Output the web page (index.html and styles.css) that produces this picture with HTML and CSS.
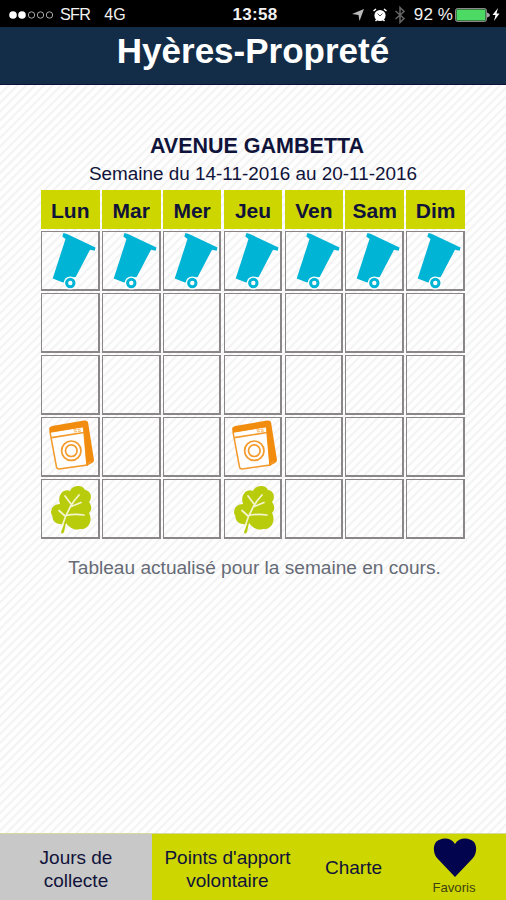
FILE: index.html
```html
<!DOCTYPE html>
<html lang="fr">
<head>
<meta charset="utf-8">
<title>Hyères-Propreté</title>
<link rel="stylesheet" href="styles.css">
</head>
<body>
<svg class="defs" aria-hidden="true">
  <symbol id="bin" viewBox="0 0 58 60">
    <path class="bin-fill" d="M22.500 2 L26 3 L54.500 16.500 L53.700 19.700 L49 18.700 L34.700 46 L29 47 L24 51 L22 51.500 L11.700 47.500 L24.500 8 L21.300 5.500 Z"/>
    <circle class="bin-hub" cx="29.300" cy="52" r="6.600"/>
    <circle class="bin-wheel" cx="29.300" cy="52" r="3.700"/>
  </symbol>
  <symbol id="washer" viewBox="0 0 58 60">
    <path class="washer-body" d="M9 15 L42.500 9.500 L46 48 L18 52 Q16 52 15.500 50 Z"/>
    <path class="washer-side" d="M8 12 Q8 10 11 9 L43 3.500 Q46 3 47 5 L53 43 Q53 45 51 46 L45.500 49 L42.500 10 L9 15.500 Z"/>
    <path class="washer-line" d="M10.500 20.700 L43 15.500 M46.500 47 L50 44.500"/>
    <path class="washer-buttons" d="M32.500 13.200 L39.500 12 M33 15 L40 13.800"/>
    <circle class="washer-line" cx="30.300" cy="33.700" r="9.700"/>
    <circle class="washer-line" cx="30.300" cy="33.700" r="5.800"/>
  </symbol>
  <symbol id="leaf" viewBox="0 0 58 60">
    <path class="leaf-fill" d="M20 53 L23 45 C17 46 11 43 11.500 37 C8 33 11 25 19 25 C16 17 22 9 29 12 C31 6 42 5 44 11 C51 12 51 20 48 23 C51 27 51 31 48 34 C52 41 48 51 39 50 C33 52 28 48 25 44 L23 53 Q21 56 20 53 Z"/>
    <path class="leaf-vein" d="M21.500 46 Q25 34 33 22 L38 16 M24 17 L30 25 M29 28 L40 23.500 M24 37 L18 31.500 M25 36.500 Q33 34.500 43 36"/>
  </symbol>
</svg>

<div class="status">
  <div class="status-left">
    <svg class="signal" viewBox="0 0 47 10"><g class="on"><circle cx="5" cy="5" r="3.8"/><circle cx="14" cy="5" r="3.8"/></g><g class="off"><circle cx="23.500" cy="5" r="3.200"/><circle cx="32.500" cy="5" r="3.200"/><circle cx="41.500" cy="5" r="3.200"/></g></svg>
    <span class="carrier">SFR</span><span class="network">4G</span>
  </div>
  <div class="clock">13:58</div>
  <div class="status-right">
    <svg class="arrow" viewBox="0 0 14 14"><path d="M13 1 L8.500 13 L7.500 7 L1 6 Z"/></svg>
    <svg class="alarm" viewBox="0 0 16 16"><circle cx="8" cy="8.500" r="5.600"/><path class="legs" d="M1.500 4 L4 2 M12 2 L14.500 4 M3.500 14 L5 12.500 M12.500 14 L11 12.500"/><path class="hands" d="M5.500 6.500 L8 9 L10.500 6.500"/></svg>
    <svg class="bluetooth" viewBox="0 0 12 18"><path d="M1.500 5 L10 12.500 L6 16.500 V1.500 L10 5.500 L1.500 13"/></svg>
    <span class="percent">92 %</span>
    <svg class="battery" viewBox="0 0 36 14"><rect class="case" x=".7" y=".7" width="30.600" height="12.600" rx="1.500"/><rect class="level" x="1.500" y="1.500" width="29" height="11"/><path class="tip" d="M32 4.500 Q35 5.500 35 7 Q35 8.500 32 9.500 Z"/></svg>
    <svg class="bolt" viewBox="0 0 8 13"><path d="M6 0 L0.500 7 H3.500 L2 13 L7.500 5.500 H4.500 Z"/></svg>
  </div>
</div>
<header class="header"><h1>Hyères-Propreté</h1></header>

<main class="content">
  <h2 class="street">AVENUE GAMBETTA</h2>
  <p class="week">Semaine du 14-11-2016 au 20-11-2016</p>
  <div class="table">
    <div class="day">Lun</div><div class="day">Mar</div><div class="day">Mer</div><div class="day">Jeu</div><div class="day">Ven</div><div class="day">Sam</div><div class="day">Dim</div>
    <div class="cell"><svg><use href="#bin"/></svg></div><div class="cell"><svg><use href="#bin"/></svg></div><div class="cell"><svg><use href="#bin"/></svg></div><div class="cell"><svg><use href="#bin"/></svg></div><div class="cell"><svg><use href="#bin"/></svg></div><div class="cell"><svg><use href="#bin"/></svg></div><div class="cell"><svg><use href="#bin"/></svg></div>
    <div class="cell"></div><div class="cell"></div><div class="cell"></div><div class="cell"></div><div class="cell"></div><div class="cell"></div><div class="cell"></div>
    <div class="cell"></div><div class="cell"></div><div class="cell"></div><div class="cell"></div><div class="cell"></div><div class="cell"></div><div class="cell"></div>
    <div class="cell"><svg><use href="#washer"/></svg></div><div class="cell"></div><div class="cell"></div><div class="cell"><svg><use href="#washer"/></svg></div><div class="cell"></div><div class="cell"></div><div class="cell"></div>
    <div class="cell"><svg><use href="#leaf"/></svg></div><div class="cell"></div><div class="cell"></div><div class="cell"><svg><use href="#leaf"/></svg></div><div class="cell"></div><div class="cell"></div><div class="cell"></div>
  </div>
  <p class="note">Tableau actualisé pour la semaine en cours.</p>
</main>

<nav class="tabs">
  <div class="tab current">Jours de<br>collecte</div>
  <div class="tab">Points d'apport<br>volontaire</div>
  <div class="tab charter">Charte</div>
  <div class="tab favorites"><svg viewBox="0 0 44 40"><path d="M22 39 L4 20 C0 15 0 8 3 4 C8 -1 18 -1 22 6 C26 -1 36 -1 41 4 C44 8 44 15 40 20 Z"/></svg><span>Favoris</span></div>
</nav>
</body>
</html>
```
FILE: styles.css
```css
* { box-sizing: border-box; }
body {
  margin: 0;
  width: 506px;
  height: 900px;
  overflow: hidden;
  display: flex;
  flex-direction: column;
  font-family: "Liberation Sans", Arial, sans-serif;
  color: #10133a;
  background: repeating-linear-gradient(135deg, #fefefe 0 3px, #f3f3f3 4px 5px, #fefefe 6.2px);
}
h1, h2, p { margin: 0; }
.defs { display: none; }

.status {
  height: 27px;
  flex: none;
  background: #000;
  color: #f2f2f2;
  display: grid;
  grid-template-columns: 1fr auto 1fr;
  align-items: center;
  padding: 2px 6px 0 8px;
  font-size: 17px;
  line-height: 25px;
}
.status-left, .status-right { display: flex; align-items: center; }
.status-right { justify-content: flex-end; }
.signal { width: 47px; height: 10px; margin-right: 5px; }
.on { fill: #fff; }
.off { fill: none; stroke: #aaa; }
.carrier { letter-spacing: -.7px; font-size: 16.2px; }
.network { margin-left: 14px; font-size: 16px; }
.clock { font-weight: bold; font-size: 17px; letter-spacing: .3px; padding-left: 2px; }
.arrow { width: 14px; height: 14px; fill: #bbb; }
.alarm { width: 16px; height: 16px; margin-left: 7px; fill: #fff; }
.legs { stroke: #fff; stroke-width: 1.5; }
.hands { fill: none; stroke: #555; }
.bluetooth { width: 12px; height: 18px; margin: 0 8px 0 6px; fill: none; stroke: #666; stroke-width: 1.5; }
.percent { font-size: 17px; letter-spacing: .1px; white-space: nowrap; }
.battery { width: 36px; height: 14px; margin-left: 2px; }
.case { fill: none; stroke: #aaa; }
.level { fill: #4cd964; }
.tip { fill: #aaa; }
.bolt { width: 8px; height: 13px; margin-left: 1px; fill: #fff; }

.header {
  height: 58px;
  flex: none;
  background: #132c47;
  border-bottom: 1px solid #0a123a;
  text-align: center;
  color: #fff;
}
.header h1 { font-size: 35px; line-height: 48px; }

.content {
  flex: 1;
  display: flex;
  flex-direction: column;
  align-items: center;
  padding-top: 47px;
}
.street { font-size: 21.5px; line-height: 28px; padding-left: 8px; white-space: nowrap; }
.week { font-size: 18.9px; line-height: 28px; white-space: nowrap; }
.table {
  margin-top: 2px;
  width: 424px;
  display: grid;
  grid-template-columns: repeat(7, minmax(0, 1fr));
  grid-template-rows: 39px repeat(5, 60.3px);
  gap: 1.8px 2.3px;
}
.day {
  background: #ced600;
  font-weight: bold;
  font-size: 21px;
  line-height: 41px;
  text-align: center;
}
.cell {
  border: 1px solid #8b8788;
  border-right-width: 2px;
  border-bottom-width: 2px;
}
.cell svg { display: block; width: 58px; height: 60px; margin: -1px; }
.bin-fill { fill: #00b4d5; }
.bin-hub { fill: #fff; }
.bin-wheel { fill: #fff; stroke: #00b4d5; stroke-width: 3; }
.washer-body { fill: #fff; stroke: #f39a2b; stroke-width: 1.5; }
.washer-side { fill: #f28c0f; }
.washer-line { fill: none; stroke: #f39a2b; stroke-width: 1.7; }
.washer-buttons { stroke: #f7b766; stroke-width: 1.2; stroke-dasharray: 3 1; }
.leaf-fill { fill: #b9cc0b; }
.leaf-vein { fill: none; stroke: #f3f5cf; stroke-width: 1.7; stroke-linecap: round; }
.note { margin-top: 15px; padding-left: 3px; font-size: 19.1px; line-height: 28px; color: #666b76; white-space: nowrap; }

.tabs {
  height: 67px;
  flex: none;
  display: grid;
  grid-template-columns: 152px 151px 101px 102px;
  background: #ced600;
  border-top: 1px solid #d6d99a;
  font-size: 19px;
  line-height: 23px;
  text-align: center;
}
.tab { display: flex; flex-direction: column; align-items: center; justify-content: center; padding-top: 3px; white-space: nowrap; }
.current { background: #c8c8c8; }
.charter { padding-top: 1px; }
.favorites { justify-content: flex-start; font-size: 13.2px; line-height: 18px; color: #3d4212; }
.favorites svg { width: 44px; height: 40px; margin: 1px 0 1px; fill: #03044e; }
.favorites span { padding-right: 2px; }
```
